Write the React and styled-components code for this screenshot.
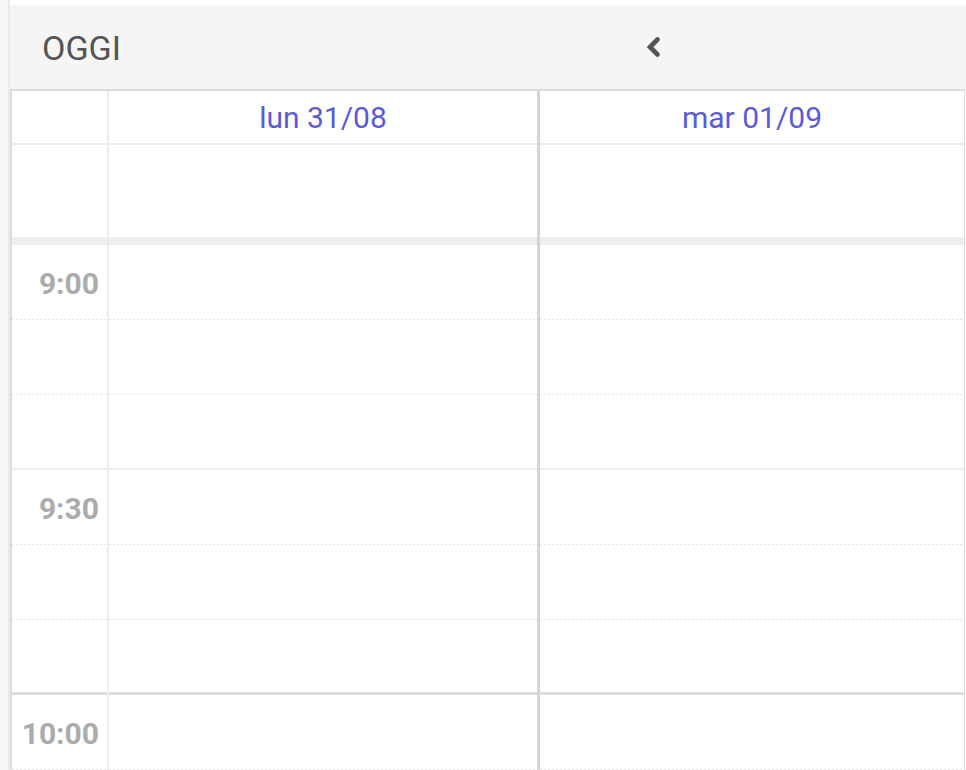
import React from "react";
import styled, { createGlobalStyle } from "styled-components";

const GlobalStyle = createGlobalStyle`
  html, body {
    margin: 0;
    padding: 0;
    background: #fff;
    font-family: Roboto, "Liberation Sans", sans-serif;
  }
  body {
    height: 770px;
    overflow: hidden;
  }
`;

const days = ["lun 31/08", "mar 01/09"];

const slots = [
  { label: "9:00", end: "dotted" },
  { label: "", end: "dotted" },
  { label: "", end: "half" },
  { label: "9:30", end: "dotted" },
  { label: "", end: "dotted" },
  { label: "", end: "hour" },
  { label: "10:00", end: "dotted" },
  { label: "", end: "dotted" },
];

export default function App() {
  return (
    <>
      <GlobalStyle />
      <Page>
        <Rail />
        <Calendar>
          <Toolbar>
            <TodayButton>OGGI</TodayButton>
            <NavButton aria-label="indietro">
              <svg width="16" height="22" viewBox="0 0 16 22">
                <polyline
                  points="12.5,3.5 5,11 12.5,18.5"
                  fill="none"
                  stroke="#555"
                  strokeWidth="4.6"
                  strokeLinecap="round"
                  strokeLinejoin="miter"
                />
              </svg>
            </NavButton>
          </Toolbar>

          <Grid>
            <Column $gutter>
              <HeadCell />
              <AllDayCell />
              <Band />
              {slots.map((s, i) => (
                <Slot key={i} $end={s.end}>
                  {s.label && <TimeLabel>{s.label}</TimeLabel>}
                </Slot>
              ))}
            </Column>
            {days.map((d, di) => (
              <Column key={d} $divider={di === 0}>
                <HeadCell>{d}</HeadCell>
                <AllDayCell />
                <Band />
                {slots.map((s, i) => (
                  <Slot key={i} $end={s.end} />
                ))}
              </Column>
            ))}
          </Grid>
        </Calendar>
      </Page>
    </>
  );
}

const Page = styled.div`
  display: flex;
  height: 770px;
  overflow: hidden;
`;

const Rail = styled.div`
  flex: none;
  width: 8px;
  background: #f8f7f5;
  border-right: 2px solid #ebebea;
`;

const Calendar = styled.div`
  flex: 1;
  display: flex;
  flex-direction: column;
  padding-top: 5px;
  min-width: 0;
`;

const Toolbar = styled.div`
  height: 84px;
  flex: none;
  background: #f5f5f5;
  display: grid;
  grid-template-columns: 626px 34px 1fr;
  align-items: center;
`;

const TodayButton = styled.div`
  padding-left: 32px;
  padding-top: 2px;
  font-size: 34px;
  color: #555;
  line-height: 1;
`;

const NavButton = styled.div`
  display: flex;
  align-items: center;
  justify-content: center;
  height: 40px;
`;

const Grid = styled.div`
  display: grid;
  grid-template-columns: 97px 431px 1fr;
  border-top: 2px solid #dcdcdc;
  border-left: 2px solid #dcdcdc;
  border-right: 1px solid #dcdcdc;
  margin-right: 1px;
`;

const Column = styled.div`
  display: flex;
  flex-direction: column;
  border-right: ${(p) =>
    p.$gutter ? "2px solid #ececec" : p.$divider ? "3px solid #d4d4d4" : "none"};
`;

const HeadCell = styled.div`
  height: 54px;
  box-sizing: border-box;
  border-bottom: 2px solid #ececec;
  display: flex;
  align-items: center;
  justify-content: center;
  font-size: 30px;
  color: #5b5bd6;
`;

const AllDayCell = styled.div`
  height: 92px;
`;

const Band = styled.div`
  height: 8px;
  background: #eeeeee;
`;

const Slot = styled.div`
  position: relative;
  height: 75px;
  box-sizing: border-box;
  display: flex;
  align-items: center;
  justify-content: flex-end;
  padding-right: 8px;
  padding-top: 2px;
  ${(p) =>
    p.$end === "hour"
      ? "border-bottom: 3px solid #dedede;"
      : p.$end === "half"
      ? "border-bottom: 2px solid #ececec;"
      : `
    &::after {
      content: "";
      position: absolute;
      left: 0;
      right: 0;
      bottom: 0;
      height: 1px;
      background: repeating-linear-gradient(90deg, #e4e4e4 0 2px, transparent 2px 4px);
    }
  `}
`;

const TimeLabel = styled.span`
  font-size: 30px;
  font-weight: 700;
  color: #acacac;
  line-height: 1;
`;
